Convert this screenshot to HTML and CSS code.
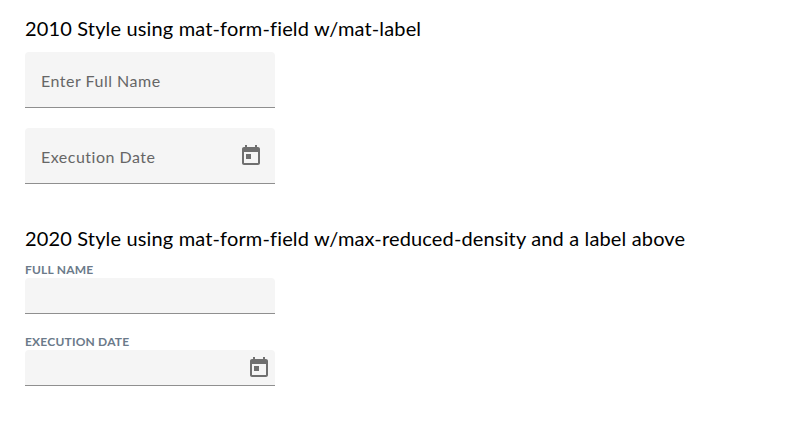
FILE: index.html
```html
<!DOCTYPE html>
<html lang="en">
<head>
<meta charset="utf-8">
<title>Form fields</title>
<link rel="stylesheet" href="styles.css">
</head>
<body>
<section class="group">
  <h2 class="title">2010 Style using mat-form-field w/mat-label</h2>
  <div class="field"><span class="label">Enter Full Name</span></div>
  <div class="field"><span class="label">Execution Date</span>
    <svg class="icon" viewBox="0 0 24 24"><path d="M19 3h-1V1h-2v2H8V1H6v2H5c-1.110 0-1.990.9-1.990 2L3 19c0 1.100.89 2 2 2h14c1.100 0 2-.9 2-2V5c0-1.100-.9-2-2-2zm0 16H5V8h14v11zM7 10h5v5H7z"/></svg>
  </div>
</section>
<section class="group">
  <h2 class="title">2020 Style using mat-form-field w/max-reduced-density and a label above</h2>
  <div class="caption">FULL NAME</div>
  <div class="field dense"></div>
  <div class="caption">EXECUTION DATE</div>
  <div class="field dense">
    <svg class="icon" viewBox="0 0 24 24"><path d="M19 3h-1V1h-2v2H8V1H6v2H5c-1.110 0-1.990.9-1.990 2L3 19c0 1.100.89 2 2 2h14c1.100 0 2-.9 2-2V5c0-1.100-.9-2-2-2zm0 16H5V8h14v11zM7 10h5v5H7z"/></svg>
  </div>
</section>
</body>
</html>
```
FILE: styles.css
```css
body {
  margin: 0;
  padding: 12px 25px;
  background: #fff;
  color: #000;
  font-family: Lato, sans-serif;
}
.group {
  margin-bottom: 38px;
}
.title {
  margin: 0 0 8px;
  font-size: 20px;
  font-weight: 400;
  line-height: 32px;
  letter-spacing: 0.15px;
  white-space: nowrap;
}
.field {
  box-sizing: border-box;
  display: flex;
  align-items: center;
  width: 250px;
  height: 56px;
  margin-bottom: 20px;
  padding: 0 12px 0 16px;
  border-bottom: 1px solid #8f8f8f;
  border-radius: 4px 4px 0 0;
  background: #f5f5f5;
}
.label {
  padding-top: 3px;
  color: #666;
  font-size: 16px;
  line-height: 24px;
  letter-spacing: 0.5px;
}
.icon {
  width: 24px;
  height: 24px;
  margin-left: auto;
  fill: #6f6f6f;
}
.caption {
  color: #6b7a8a;
  font-size: 12px;
  font-weight: 700;
  line-height: 16px;
  letter-spacing: 0.2px;
}
.dense {
  height: 36px;
  padding: 0 4px;
}
```
